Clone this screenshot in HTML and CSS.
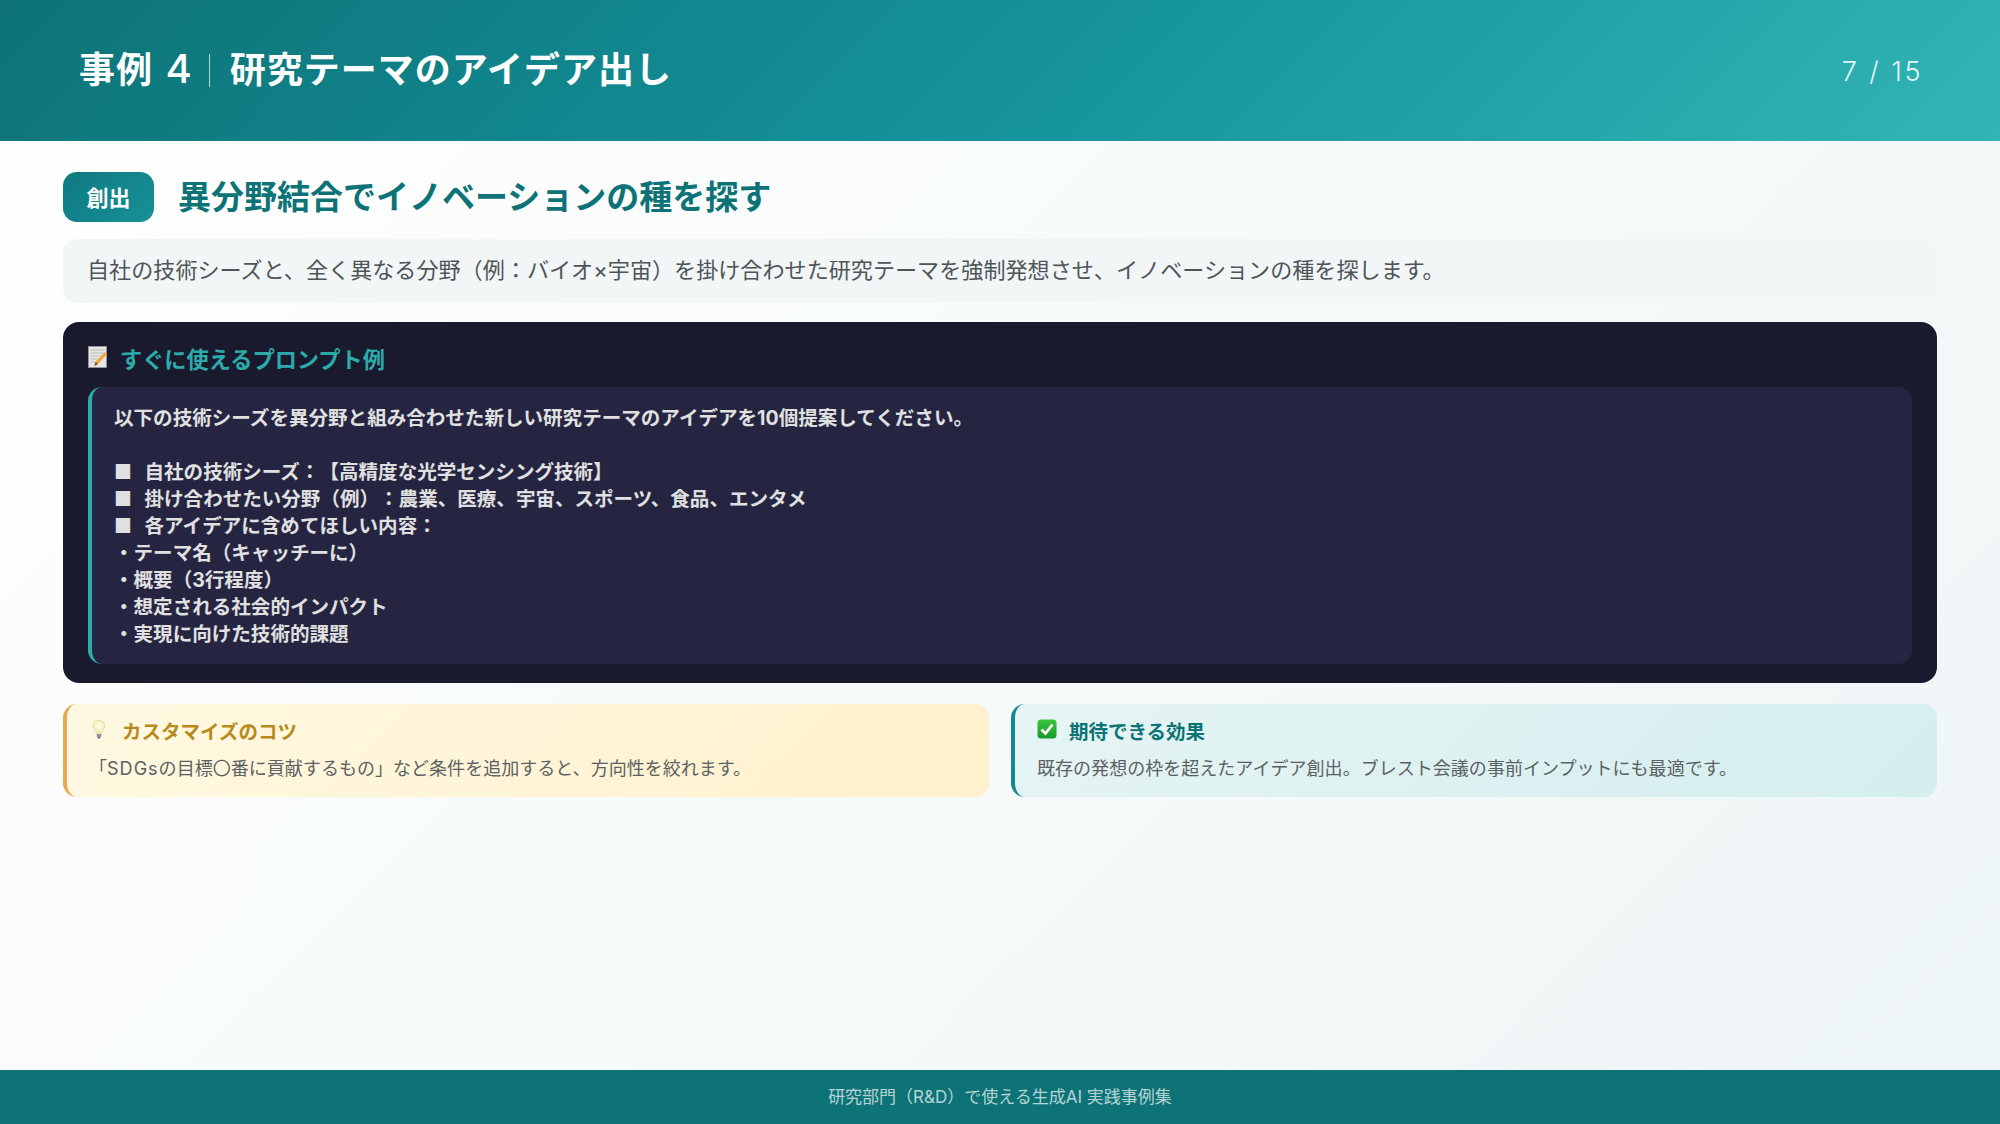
FILE: index.html
```html
<!DOCTYPE html>
<html lang="ja">
<head>
<meta charset="utf-8">
<title>事例 4</title>
<link rel="stylesheet" href="styles.css">
</head>
<body>
<div class="slide">
  <header class="top">
    <div class="top-title"><span>事例 <span class="num">4</span></span><i class="sep"></i><span>研究テーマのアイデア出し</span></div>
    <div class="page">7 / 15</div>
  </header>
  <main class="main">
    <div class="headline">
      <span class="badge">創出</span>
      <h1>異分野結合でイノベーションの種を探す</h1>
    </div>
    <p class="desc"><span>自社の技術シーズと、全く異なる分野（例：バイオ×宇宙）を掛け合わせた研究テーマを強制発想させ、イノベーションの種を探します。</span></p>
    <section class="prompt">
      <h2>
        <svg class="ico memo" viewBox="0 0 19 22"><rect x=".5" y=".5" width="18" height="21" fill="#e9e7e2" stroke="#9a9a9a" stroke-width=".8"/><path d="M2.500 4h14M2.500 7h14M2.500 10h14M2.500 13h8M2.500 16h5" stroke="#b4b4be" stroke-width=".9"/><path d="M17 6l2 2-9 10-3.500 2 1-4z" fill="#f0a830"/><path d="M7.500 16l-1 4 3.500-2z" fill="#6d4a2c"/></svg>
        <span>すぐに使えるプロンプト例</span>
      </h2>
      <div class="code">
        <div>以下の技術シーズを異分野と組み合わせた新しい研究テーマのアイデアを10個提案してください。</div>
        <div class="blank"></div>
        <div>■ 自社の技術シーズ：【高精度な光学センシング技術】</div>
        <div>■ 掛け合わせたい分野（例）：農業、医療、宇宙、スポーツ、食品、エンタメ</div>
        <div>■ 各アイデアに含めてほしい内容：</div>
        <div>・テーマ名（キャッチーに）</div>
        <div>・概要（3行程度）</div>
        <div>・想定される社会的インパクト</div>
        <div>・実現に向けた技術的課題</div>
      </div>
    </section>
    <div class="tips">
      <section class="tip tip-y">
        <h3>
          <svg class="ico bulb" viewBox="0 0 20 20"><defs><radialGradient id="b" cx=".5" cy=".4" r=".6"><stop offset="0" stop-color="#fffdf0"/><stop offset="1" stop-color="#f7e7a8"/></radialGradient></defs><path d="M10 1a6 6 0 0 0-4 10.400c1 1 1.500 2 1.600 3.600h4.800c.1-1.600.6-2.600 1.600-3.600A6 6 0 0 0 10 1z" fill="url(#b)" stroke="#dccf9c" stroke-width=".6"/><rect x="7.700" y="15" width="4.600" height="3" rx=".8" fill="#8d929a"/><rect x="8.700" y="18" width="2.600" height="1.500" rx=".7" fill="#55585e"/></svg>
          <span>カスタマイズのコツ</span>
        </h3>
        <p>「<span class="latin">SDGs</span>の目標〇番に貢献するもの」など条件を追加すると、方向性を絞れます。</p>
      </section>
      <section class="tip tip-g">
        <h3>
          <svg class="ico check" viewBox="0 0 20 20"><defs><linearGradient id="c" x1="0" y1="0" x2="0" y2="1"><stop offset="0" stop-color="#3cc43c"/><stop offset="1" stop-color="#169a28"/></linearGradient></defs><rect x=".5" y=".5" width="19" height="19" rx="3.500" fill="url(#c)"/><path d="M4.500 10.500l4 4 7-9" fill="none" stroke="#fff" stroke-width="2.800"/></svg>
          <span>期待できる効果</span>
        </h3>
        <p>既存の発想の枠を超えたアイデア創出。ブレスト会議の事前インプットにも最適です。</p>
      </section>
    </div>
  </main>
  <footer class="foot"><span>研究部門（R&amp;D）で使える生成AI 実践事例集</span></footer>
</div>
</body>
</html>
```
FILE: styles.css
```css
* { box-sizing: border-box; }
html, body { margin: 0; height: 100%; }
body { font-family: Inter, "Noto Sans CJK JP", sans-serif; text-spacing-trim: space-all; }
.slide { width: 2000px; height: 1124px; display: flex; flex-direction: column; background: linear-gradient(135deg, #ffffff 0%, #eef5f6 100%); overflow: hidden; }
.top { height: 141px; flex: none; display: flex; align-items: center; justify-content: space-between; padding: 0 79px; background: linear-gradient(135deg, #0d7377 0%, #14919b 50%, #32b5b5 100%); color: #fff; }
.top-title { display: flex; align-items: center; gap: 19px; font-size: 36px; font-weight: 700; letter-spacing: 1px; padding-bottom: 7px; }
.num { font-size: 40px; font-weight: 500; margin-left: 3px; }
.sep { width: 1px; height: 33px; background: rgba(255,255,255,.7); margin: 7px 1px 0 -3px; }
.page { font-size: 27px; font-weight: 300; letter-spacing: 2.500px; color: rgba(255,255,255,.9); margin-right: -2px; padding-top: 2px; }
.main { flex: 1; padding: 31px 63px 0; }
.headline { display: flex; align-items: center; gap: 24px; height: 50px; }
.badge { width: 91px; height: 50px; display: flex; align-items: center; justify-content: center; padding-bottom: 2px; border-radius: 14px; background: linear-gradient(135deg, #0f7a80, #179097); color: #fff; font-size: 22px; font-weight: 700; }
h1 { margin: 0; font-size: 33px; font-weight: 700; line-height: 50px; color: #0d7377; }
.desc { margin: 17px 0 0; height: 64px; display: flex; align-items: center; padding: 0 24px 6px; border-radius: 14px; background: #f2f6f7; color: #4e5557; font-size: 22.100px; }
.prompt { margin-top: 19px; height: 361px; padding: 20px 25px 18px; border-radius: 16px; background: #1a1a2e; }
h2 { margin: 0; height: 45px; display: flex; align-items: center; gap: 13px; padding-bottom: 13px; font-size: 22.200px; font-weight: 700; color: #2cabab; }
.ico { flex: none; display: block; }
.memo { width: 19px; height: 22px; margin-top: -3px; }
.code { height: 277px; padding: 18px 22px; border-left: 4px solid #2cabab; border-radius: 14px; background: #252542; color: #e0e0e0; font-size: 19.560px; font-weight: 700; line-height: 27px; word-spacing: 8px; }
.blank { height: 27px; }
.tips { margin-top: 21px; display: grid; grid-template-columns: 1fr 1fr; gap: 22px; }
.tip { height: 93px; padding: 12px 22px; border-radius: 14px; }
.tip-y { border-left: 4px solid #e8a850; background: linear-gradient(135deg, #fff8e1, #fff1cd); }
.tip-g { border-left: 4px solid #128a8e; background: linear-gradient(135deg, #e6f4f4, #d4eeee); }
h3 { margin: 0; height: 28px; display: flex; align-items: center; gap: 12px; font-size: 19.500px; font-weight: 700; }
.tip-y h3 { gap: 13px; color: #b88a1b; }
.tip-g h3 { color: #0d7377; }
.bulb, .check { width: 20px; height: 20px; margin-top: -2px; }
.tip p { margin: 11px 0 0; font-size: 18.040px; line-height: 27px; color: #5b6163; }
.latin { letter-spacing: 1px; }
.foot { flex: none; height: 54px; display: flex; align-items: center; justify-content: center; padding-bottom: 3px; background: #0d7377; color: rgba(255,255,255,.7); font-size: 17px; }
```
